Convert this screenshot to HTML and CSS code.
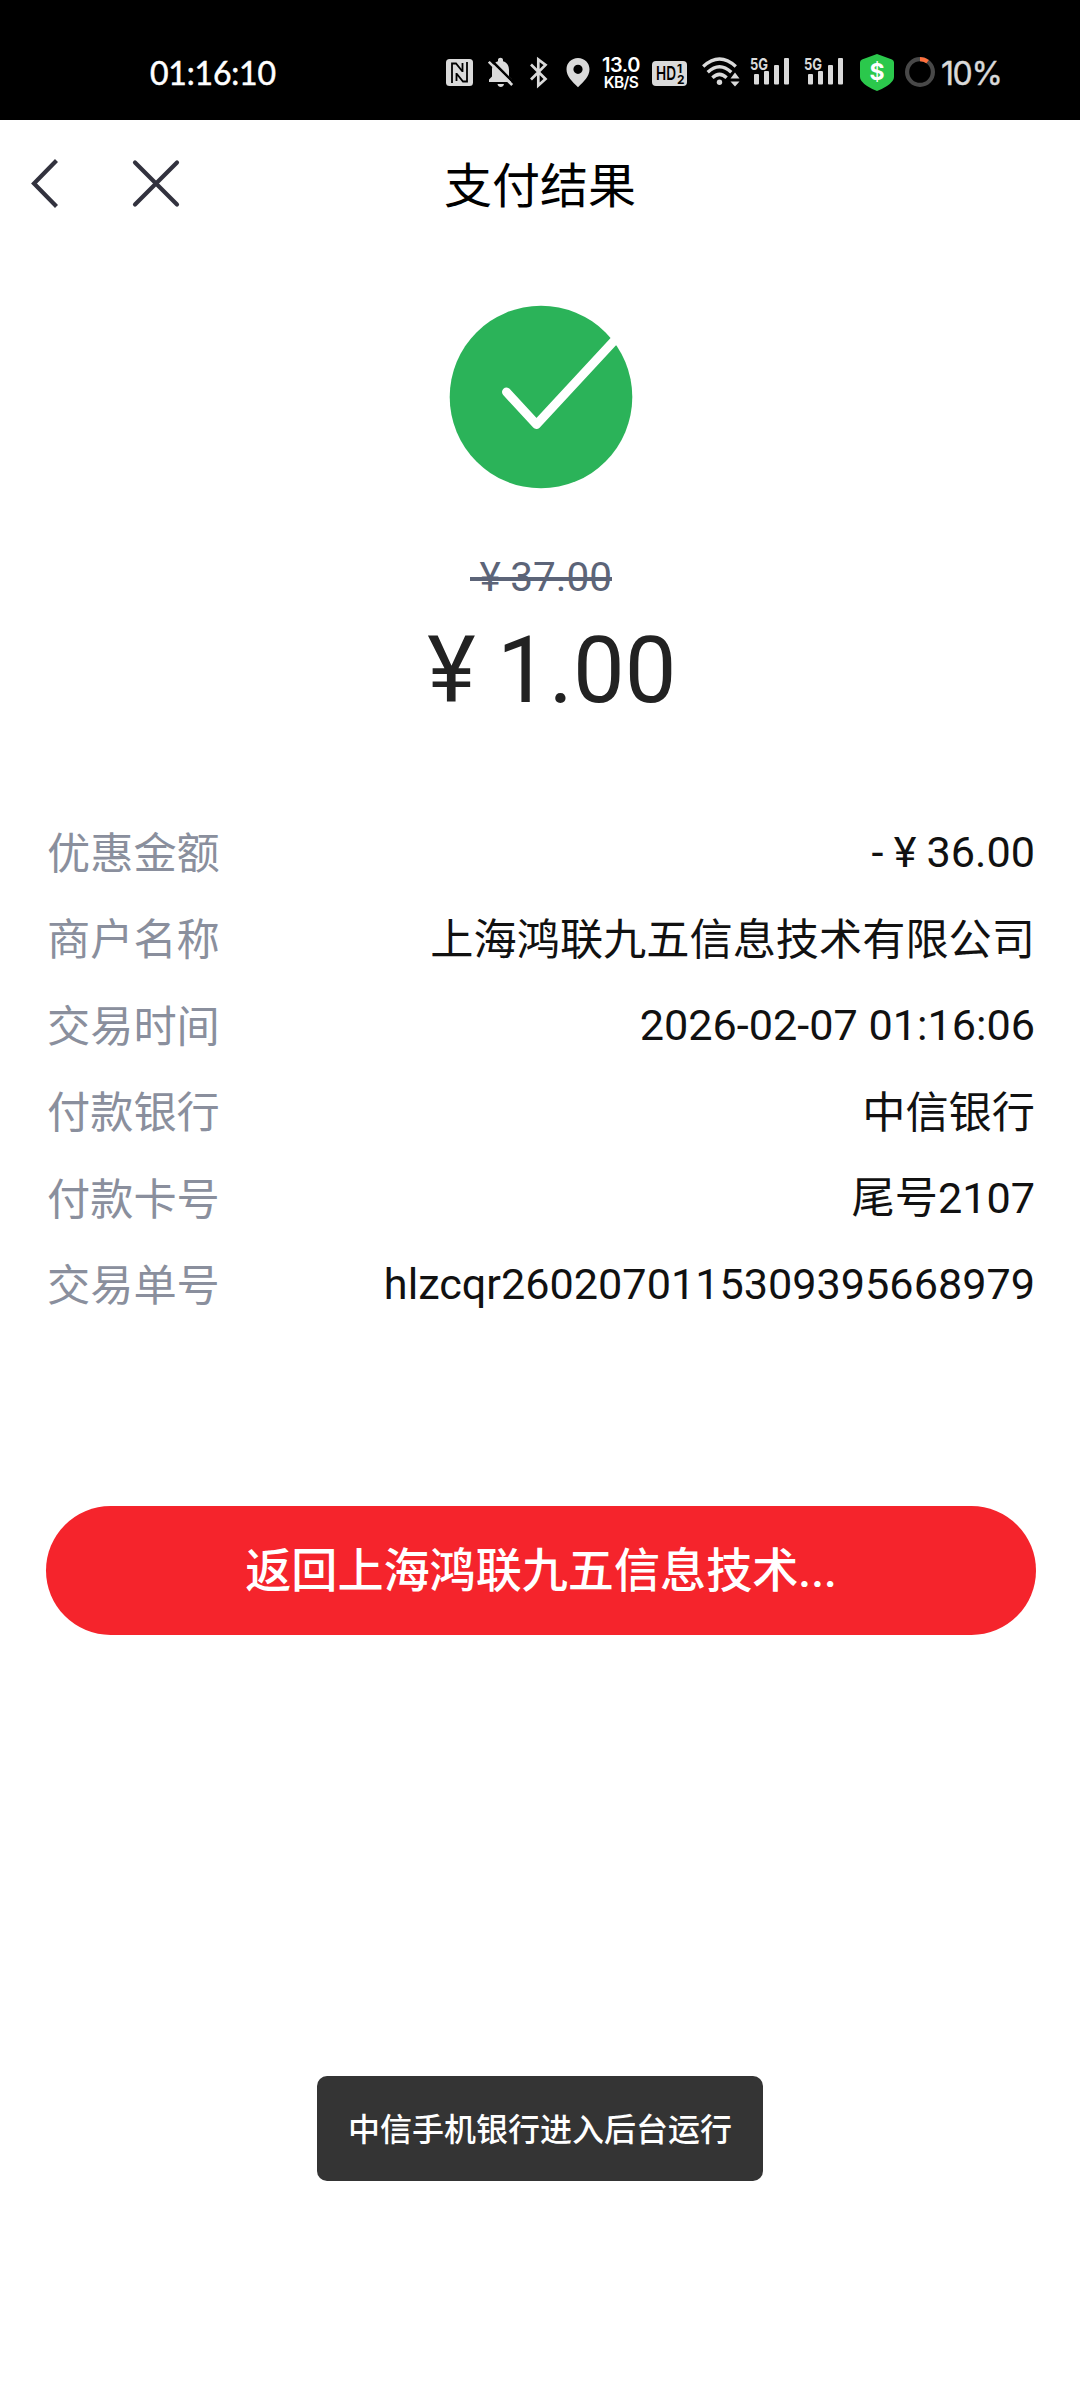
FILE: index.html
```html
<!DOCTYPE html>
<html lang="zh-CN">
<head>
<meta charset="utf-8">
<title>支付结果</title>
<link rel="stylesheet" href="styles.css">
</head>
<body>
<header class="status">
  <span class="clock">01:16:10</span>
  <div class="tray">
    <svg class="nfc" width="27" height="40" viewBox="0 0 27 40"><rect y="7" width="27" height="27" rx="3.5" fill="#dadada"/><path d="M6 31V11.500h4l6.500 8M21 10v19.500h-4L10.500 21.500M16.500 11v9M10.500 21v8" fill="none" stroke="#000" stroke-width="1.800"/></svg>
    <svg class="bell" width="26" height="40" viewBox="0 0 26 40"><path d="M1 30v-2.500l3-3V18c0-4.500 2.800-7.900 6-8.700V8c0-3 5-3 5 0v1.300c4.200 1.200 6 4.400 6 8.700v6.500l3 3V30z" fill="#dadada"/><path d="M9.500 32h6.500c-.5 4-6 4-6.500 0z" fill="#dadada"/><path d="M2.500 7.500l24 24" stroke="#000" stroke-width="2.500"/><path d="M.8 9.800l23.400 23.200" stroke="#dadada" stroke-width="2.600"/></svg>
    <svg class="bt" width="20" height="40" viewBox="0 0 20 40"><path d="M2 12.500l14.500 14.500-7.200 6.500v-26L16.500 13 2 27.500" fill="none" stroke="#dadada" stroke-width="2.700"/></svg>
    <svg class="pin" width="24" height="40" viewBox="0 0 24 40"><path fill-rule="evenodd" d="M12 6C5.500 6 .5 11 .5 17.200.5 24 6 29.500 12 35.200c6-5.700 11.500-11.200 11.500-18C23.500 11 18.500 6 12 6zm0 6.700a4.600 4.600 0 1 1 0 9.200 4.600 4.600 0 0 1 0-9.200z" fill="#dadada"/></svg>
    <div class="speed"><span class="rate">13.0</span><span class="unit">KB/S</span></div>
    <svg class="hd" width="35" height="40" viewBox="0 0 35 40"><rect y="9" width="35" height="25" rx="4" fill="#dadada"/><text x="4" y="28.300" class="hd-t" textLength="20" lengthAdjust="spacingAndGlyphs">HD</text><text x="25" y="21" class="hd-n">1</text><text x="25" y="32" class="hd-n">2</text></svg>
    <svg class="wifi" width="38" height="40" viewBox="0 0 38 40"><g fill="none" stroke="#dadada" stroke-width="3.400"><path d="M1.200 14.500q16.300-15 32.600 0"/><path d="M5.700 20.300q11.800-11 23.600 0"/><path d="M10.400 25.800q7.100-6.800 14.200 0"/></g><circle cx="17.500" cy="30.300" r="2.700" fill="#dadada"/><path d="M28.500 26.500L33 20.500l4.500 6zM28.500 29.500h9L33 34.500z" fill="#dadada"/></svg>
    <svg class="sig" width="40" height="40" viewBox="0 0 40 40"><text x="0" y="17.500" class="g5" textLength="18" lengthAdjust="spacingAndGlyphs">5G</text><g fill="#dadada"><rect x="4" y="22" width="5" height="10.500" rx="1"/><rect x="14" y="19" width="5" height="13.500" rx="1"/><rect x="24" y="13" width="5" height="19.500" rx="1"/><rect x="34" y="6" width="5" height="26.500" rx="1"/></g></svg>
    <svg class="sig" width="40" height="40" viewBox="0 0 40 40"><text x="0" y="17.500" class="g5" textLength="18" lengthAdjust="spacingAndGlyphs">5G</text><g fill="#dadada"><rect x="4" y="22" width="5" height="10.500" rx="1"/><rect x="14" y="19" width="5" height="13.500" rx="1"/><rect x="24" y="13" width="5" height="19.500" rx="1"/><rect x="34" y="6" width="5" height="26.500" rx="1"/></g></svg>
    <svg class="shield" width="34" height="40" viewBox="0 0 34 40"><path d="M17 2l15 5.500q2 .8 2 3V25q0 2.300-1.500 4-4 5.500-15.500 10Q5.500 34.500 1.500 29 0 27.300 0 25V10.500q0-2.200 2-3z" fill="#2bc84c"/><text x="17" y="28" text-anchor="middle" class="dollar">$</text></svg>
    <svg class="ring" width="30" height="40" viewBox="0 0 30 40"><circle cx="15" cy="20" r="12.900" fill="none" stroke="#484848" stroke-width="4.200"/><path d="M15 7.100a12.900 12.900 0 0 1 7.600 2.500" fill="none" stroke="#ff6f3c" stroke-width="4.200"/></svg>
    <span class="pct">10%</span>
  </div>
</header>

<nav class="nav">
  <div class="nav-side">
    <svg width="32" height="60" viewBox="0 0 32 60"><path d="M28.500 7.500L6 30.500l22.500 23" fill="none" stroke="#32323e" stroke-width="4.200"/></svg>
    <svg width="48" height="60" viewBox="0 0 48 60"><path d="M3 9.500l42 42M45 9.500L3 51.500" fill="none" stroke="#32323e" stroke-width="4.200" stroke-linecap="round"/></svg>
  </div>
  <h1 class="title">支付结果</h1>
  <div class="nav-side"></div>
</nav>

<main class="page">
  <svg class="ok" width="184" height="184" viewBox="0 0 184 184"><circle cx="92" cy="92" r="91.300" fill="#2bb359"/><path d="M57.500 87l30 32.500L176 24" fill="none" stroke="#fff" stroke-width="9" stroke-linecap="round" stroke-linejoin="round"/></svg>
  <del class="was"><span class="yen">¥</span>37.00</del>
  <p class="now"><span class="yen">¥</span>1.00</p>

  <dl class="rows">
    <div class="row"><dt>优惠金额</dt><dd>-<span class="yen">¥</span>36.00</dd></div>
    <div class="row"><dt>商户名称</dt><dd class="han">上海鸿联九五信息技术有限公司</dd></div>
    <div class="row"><dt>交易时间</dt><dd>2026-02-07 01:16:06</dd></div>
    <div class="row"><dt>付款银行</dt><dd class="han">中信银行</dd></div>
    <div class="row"><dt>付款卡号</dt><dd>尾号2107</dd></div>
    <div class="row"><dt>交易单号</dt><dd>hlzcqr2602070115309395668979</dd></div>
  </dl>

  <button class="back">返回上海鸿联九五信息技术...</button>
  <div class="toast">中信手机银行进入后台运行</div>
</main>
</body>
</html>
```
FILE: styles.css
```css
* { box-sizing: border-box; margin: 0; padding: 0; }

body {
  width: 1080px;
  height: 2400px;
  overflow: hidden;
  background: #fff;
  color: #111;
  font-family: Roboto, "Noto Sans CJK SC", sans-serif;
}

svg { display: block; flex: none; }

/* Status bar */
.status {
  display: flex;
  justify-content: space-between;
  height: 120px;
  padding: 52px 78px 0 150px;
  background: #000;
  color: #fff;
}
.clock {
  font: 400 32px/40px Lato, sans-serif;
  height: 40px;
  padding-top: 1px;
  letter-spacing: -.2px;
  -webkit-text-stroke: .5px #fff;
}
.tray { display: flex; height: 40px; }
.bell { margin-left: 15px; }
.bt { margin-left: 15px; }
.pin { margin-left: 17px; }
.speed {
  width: 38px;
  margin-left: 12px;
  padding-top: 4px;
  display: flex;
  flex-direction: column;
  align-items: center;
  white-space: nowrap;
  font-family: Inter, sans-serif;
  font-weight: 600;
}
.rate { font-size: 20px; line-height: 19px; letter-spacing: -.4px; }
.unit { font-size: 15.5px; line-height: 15px; letter-spacing: -.6px; }
.hd { margin-left: 12px; }
.wifi { margin-left: 15px; }
.sig { margin-left: 14px; }
.wifi + .sig { margin-left: 10px; }
.shield { margin-left: 16px; }
.ring { margin-left: 11px; }
.pct {
  width: 61px;
  margin-left: 6px;
  padding-top: 2px;
  color: #dadada;
  white-space: nowrap;
  font: 400 32px/40px Inter, sans-serif;
  letter-spacing: -1.4px;
  -webkit-text-stroke: .4px #dadada;
}
.hd-t { font: 600 19px Inter, sans-serif; fill: #000; }
.hd-n { font: 700 12px Inter, sans-serif; fill: #000; }
.g5 { font: 700 16px Inter, sans-serif; fill: #dadada; }
.dollar { font: 700 23px Inter, sans-serif; fill: #fff; }

/* Title bar */
.nav {
  display: flex;
  justify-content: space-between;
  height: 130px;
  padding: 33px 28px 0;
}
.nav-side { display: flex; gap: 72px; width: 300px; }
.title {
  padding-top: 2px;
  font-size: 48px;
  line-height: 64px;
  font-weight: 400;
  color: #000;
}

/* Result */
.page {
  display: flex;
  flex-direction: column;
  align-items: center;
  padding: 55px 44px 0 46px;
}
/* Currency sign set in a full em, as a full-width character */
.yen { padding: 0 .235em; }
.was {
  margin-top: 60px;
  line-height: 56px;
  font-size: 40.5px;
  color: #5c6478;
  text-decoration: none;
  background: linear-gradient(#5c6478, #5c6478) 0 28px / 100% 4px no-repeat;
}
.now {
  margin-top: 11px;
  line-height: 110px;
  font-size: 92px;
  color: #222;
}
.rows { align-self: stretch; margin-top: 84px; padding: 0 1px; }
.row {
  display: flex;
  justify-content: space-between;
  height: 86.4px;
  line-height: 86.4px;
  font-size: 43.2px;
  white-space: nowrap;
}
.row dt { padding-top: 2px; color: #8a8f9d; }
.row .han { padding-top: 2px; }

.back {
  align-self: stretch;
  height: 129px;
  margin: 178px 0 0;
  border: 0;
  border-radius: 65px;
  background: #f5242c;
  color: #fff;
  font: 500 46.100px/128px Roboto, "Noto Sans CJK SC", sans-serif;
}
.toast {
  width: 446px;
  height: 105px;
  margin-top: 441px;
  margin-right: 2px;
  padding-top: 3px;
  border-radius: 10px;
  background: #343434;
  color: #fff;
  text-align: center;
  font-size: 32px;
  font-weight: 500;
  line-height: 102px;
}
```
